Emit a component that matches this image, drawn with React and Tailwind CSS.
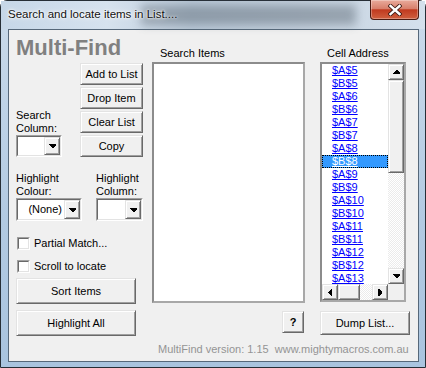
import React from "react";

const items = ["$A$5","$B$5","$A$6","$B$6","$A$7","$B$7","$A$8","$B$8","$A$9","$B$9","$A$10","$B$10","$A$11","$B$11","$A$12","$B$12","$A$13"];

const RAISED = "bg-[#f0f0f0] border border-t-[#e3e3e3] border-l-[#e3e3e3] border-r-[#696969] border-b-[#696969] shadow-[inset_1px_1px_0_#ffffff,inset_-1px_-1px_0_#a0a0a0]";

function Tri({ dir }) {
  const pts = {
    up: "3,0 4,0 7,3 7,4 0,4 0,3",
    down: "0,0 7,0 7,1 4,4 3,4 0,1",
    left: "0,3 3,0 4,0 4,7 3,7 0,4",
    right: "0,0 1,0 4,3 4,4 1,7 0,7",
  };
  const v = dir === "up" || dir === "down";
  const w = v ? 7 : 4;
  const h = v ? 4 : 7;
  return (
    <svg width={w} height={h} viewBox={`0 0 ${w} ${h}`} shapeRendering="crispEdges">
      <polygon points={pts[dir]} fill="#000" />
    </svg>
  );
}

function Btn({ className = "", children }) {
  return (
    <div className={`flex items-center justify-center text-[11px] text-black ${RAISED} ${className}`}>
      {children}
    </div>
  );
}

function SBtn({ dir, className = "" }) {
  return (
    <div className={`flex items-center justify-center shrink-0 ${RAISED} ${className}`}>
      <Tri dir={dir} />
    </div>
  );
}

function Combo({ className = "", value }) {
  return (
    <div className={`flex border border-t-[#a0a0a0] border-l-[#a0a0a0] border-r-[#ffffff] border-b-[#ffffff] ${className}`}>
      <div className="flex flex-1 border border-t-[#696969] border-l-[#696969] border-r-[#e3e3e3] border-b-[#e3e3e3] bg-white">
        <div className="flex flex-1 items-center justify-end pr-[2px] text-[11px] text-black">{value}</div>
        <div className={`w-[16px] flex items-center justify-center ${RAISED}`}>
          <Tri dir="down" />
        </div>
      </div>
    </div>
  );
}

function Check({ label, className = "" }) {
  return (
    <div className={`flex h-[14px] items-center gap-[4px] pl-[1px] ${className}`}>
      <div className="w-[13px] h-[13px] border border-t-[#a0a0a0] border-l-[#a0a0a0] border-r-[#ffffff] border-b-[#ffffff]">
        <div className="w-full h-full border border-t-[#696969] border-l-[#696969] border-r-[#e3e3e3] border-b-[#e3e3e3] bg-white" />
      </div>
      <span className="text-[11px] leading-[13px] text-black whitespace-nowrap">{label}</span>
    </div>
  );
}

const TRACK = "bg-[repeating-conic-gradient(#ffffff_0%_25%,#ebebeb_0%_50%)] bg-[length:2px_2px]";

export default function App() {
  return (
    <div className="relative w-[426px] h-[368px] overflow-hidden font-['Liberation_Sans',Arial,sans-serif] bg-white">
      <div className="w-full h-full flex flex-col rounded-t-[7px] border border-[#262e36] bg-[linear-gradient(to_bottom,#cbdbeb,#b2cae2_60%,#a9c4df)]">
        {/* title bar */}
        <div className="relative h-[28px] shrink-0 flex justify-between bg-[linear-gradient(to_right,#c6d7e8,#d6e2ee_25%,#bccbda_45%,#c5d2df_70%,#d4e0ec)]">
          <div className="absolute left-[140px] top-[4px] w-[215px] h-[20px] bg-[#4a5662] opacity-40 blur-[5px]" />
          <span className="relative pl-[7px] pt-[5px] text-[11.5px] leading-[16px] text-[#111] whitespace-nowrap [text-shadow:0_0_6px_#ffffff,0_0_3px_#ffffff,0_0_2px_#ffffff]">
            Search and locate items in List....
          </span>
          <div className="relative self-start -mt-[1px] mr-[6px] w-[49px] h-[20px] rounded-b-[4px] border border-t-0 border-[#4a1b12] bg-[linear-gradient(to_bottom,#e9ab9c_0%,#d8806c_45%,#c03a1f_52%,#d0603f_100%)] shadow-[inset_0_0_0_1px_rgba(255,255,255,0.3)] flex items-center justify-center">
            <svg width="14" height="12" viewBox="0 0 14 12">
              <path d="M2.5 2 L11.5 10 M11.5 2 L2.5 10" stroke="#3b1a14" strokeWidth="4.2" strokeLinecap="square" />
              <path d="M2.5 2 L11.5 10 M11.5 2 L2.5 10" stroke="#ffffff" strokeWidth="2.4" strokeLinecap="square" />
            </svg>
          </div>
        </div>

        {/* client */}
        <div className="flex-1 ml-[7px] mr-[6px] mb-[5px] border border-[#56687a] bg-[#f0f0f0] flex pl-[7px] pt-[5px] text-black">
          {/* left column */}
          <div className="w-[127px] shrink-0 flex flex-col">
            <div className="h-[26px] leading-[26px] text-[22px] font-bold text-[#808080] whitespace-nowrap">Multi-Find</div>
            <div className="mt-[2px] flex">
              <div className="w-[64px] flex flex-col justify-end">
                <div className="text-[11px] leading-[13px]">Search<br />Column:</div>
                <Combo className="w-[46px] h-[22px]" />
              </div>
              <div className="w-[63px] flex flex-col gap-[2px]">
                <Btn className="h-[22px]">Add to List</Btn>
                <Btn className="h-[22px]">Drop Item</Btn>
                <Btn className="h-[22px]">Clear List</Btn>
                <Btn className="h-[22px]">Copy</Btn>
              </div>
            </div>
            <div className="mt-[15px] flex gap-[14px]">
              <div className="w-[66px] flex flex-col">
                <div className="text-[11px] leading-[13px]">Highlight<br />Colour:</div>
                <Combo className="w-[66px] h-[23px]" value="(None)" />
              </div>
              <div className="w-[47px] flex flex-col">
                <div className="text-[11px] leading-[13px]">Highlight<br />Column:</div>
                <Combo className="w-[47px] h-[23px]" />
              </div>
            </div>
            <Check className="mt-[15px]" label="Partial Match..." />
            <Check className="mt-[9px]" label="Scroll to locate" />
            <Btn className="mt-[5px] w-[120px] h-[26px]">Sort Items</Btn>
            <Btn className="mt-[6px] w-[120px] h-[26px]">Highlight All</Btn>
          </div>

          {/* right area */}
          <div className="ml-[9px] flex flex-col">
            <div className="flex gap-[15px]">
              <div className="w-[153px] flex flex-col">
                <div className="mt-[12px] pl-[8px] text-[11px] leading-[13px]">Search Items</div>
                <div className="mt-[2px] h-[241px] border-2 border-t-[#8c8c8c] border-l-[#8c8c8c] border-r-[#a8a8a8] border-b-[#a8a8a8] bg-white" />
              </div>
              <div className="w-[86px] flex flex-col">
                <div className="mt-[12px] pl-[7px] text-[11px] leading-[13px] whitespace-nowrap">Cell Address</div>
                <div className="mt-[2px] h-[240px] border-2 border-t-[#8c8c8c] border-l-[#8c8c8c] border-r-[#a8a8a8] border-b-[#a8a8a8] bg-white flex flex-col">
                  <div className="flex h-[220px]">
                    <div className="w-[66px] overflow-hidden">
                      {items.map((t, i) =>
                        i === 7 ? (
                          <div key={t} className="h-[13px] leading-[11px] pl-[9px] text-[11px] bg-[#3399ff] text-white underline border border-dotted border-black">
                            {t}
                          </div>
                        ) : (
                          <div key={t} className="h-[13px] leading-[13px] pl-[10px] text-[11px] text-[#0000ff] underline">
                            {t}
                          </div>
                        )
                      )}
                    </div>
                    <div className="w-[16px] flex flex-col">
                      <SBtn dir="up" className="h-[16px]" />
                      <div className={`h-[93px] ${RAISED}`} />
                      <div className={`flex-1 ${TRACK}`} />
                      <SBtn dir="down" className="h-[16px]" />
                    </div>
                  </div>
                  <div className="flex h-[16px]">
                    <SBtn dir="left" className="w-[16px]" />
                    <div className={`w-[22px] ${RAISED}`} />
                    <div className={`flex-1 ${TRACK}`} />
                    <SBtn dir="right" className="w-[16px]" />
                    <div className="w-[16px] bg-[#f0f0f0]" />
                  </div>
                </div>
              </div>
            </div>
            <div className="mt-[8px] flex items-start">
              <Btn className="ml-[130px] w-[22px] h-[22px] font-bold">?</Btn>
              <Btn className="ml-[16px] w-[90px] h-[24px]">Dump List...</Btn>
            </div>
            <div className="mt-[8px] pl-[6px] text-[11px] leading-[13px] text-[#949494] whitespace-pre">MultiFind version: 1.15  www.mightymacros.com.au</div>
          </div>
        </div>
      </div>
    </div>
  );
}
